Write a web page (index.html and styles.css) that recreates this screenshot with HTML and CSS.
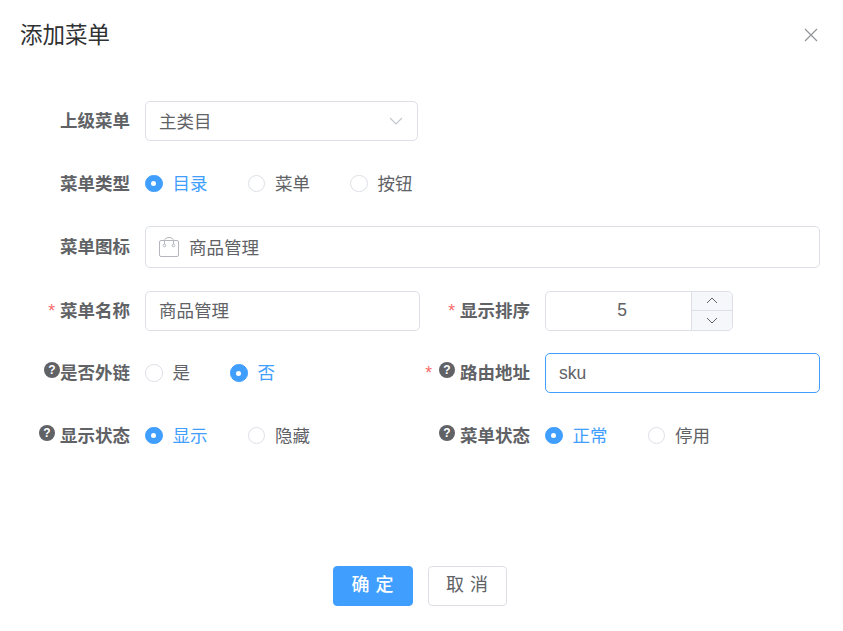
FILE: index.html
```html
<!DOCTYPE html>
<html lang="zh-CN">
<head>
<meta charset="utf-8">
<title>添加菜单</title>
<link rel="stylesheet" href="styles.css">
</head>
<body>
<div class="dialog">
  <header class="head">
    <span class="title">添加菜单</span>
    <svg class="close" width="14" height="14" viewBox="0 0 14 14"><path d="M1 1L13 13M13 1L1 13" stroke="#909399" stroke-width="1.2" fill="none"/></svg>
  </header>
  <form class="form">
    <div class="row">
      <div class="field">
        <label class="label">上级菜单</label>
        <div class="box select cjk"><span>主类目</span>
          <svg width="14" height="8" viewBox="0 0 14 8"><path d="M1 1L7 7L13 1" stroke="#c0c4cc" stroke-width="1.1" fill="none"/></svg>
        </div>
      </div>
    </div>
    <div class="row">
      <div class="field">
        <label class="label">菜单类型</label>
        <div class="radios">
          <span class="radio on"><i class="dot"></i>目录</span>
          <span class="radio"><i class="dot"></i>菜单</span>
          <span class="radio"><i class="dot"></i>按钮</span>
        </div>
      </div>
    </div>
    <div class="row">
      <div class="field grow">
        <label class="label">菜单图标</label>
        <div class="box icon-box cjk">
          <svg width="20" height="20" viewBox="0 0 20 20" fill="none" stroke="#b4b7bd" stroke-width="1"><rect x="0.5" y="3.5" width="19" height="16" rx="1.5"/><path d="M5.5 7V4a4.5 3.5 0 0 1 9 0V7"/><circle cx="5.5" cy="8.5" r="1.3"/><circle cx="14.5" cy="8.5" r="1.3"/></svg>
          <span>商品管理</span>
        </div>
      </div>
    </div>
    <div class="row">
      <div class="field half">
        <label class="label"><em class="req">*</em>菜单名称</label>
        <div class="box name cjk">商品管理</div>
      </div>
      <div class="field">
        <label class="label"><em class="req">*</em>显示排序</label>
        <div class="box number">
          <span class="num">5</span>
          <div class="steps">
            <span class="step"><svg width="12" height="7" viewBox="0 0 12 7"><path d="M1 6L6 1L11 6" stroke="#606266" stroke-width="1" fill="none"/></svg></span>
            <span class="step"><svg width="12" height="7" viewBox="0 0 12 7"><path d="M1 1L6 6L11 1" stroke="#606266" stroke-width="1" fill="none"/></svg></span>
          </div>
        </div>
      </div>
    </div>
    <div class="row">
      <div class="field half">
        <label class="label"><i class="help tight">?</i>是否外链</label>
        <div class="radios">
          <span class="radio short"><i class="dot"></i>是</span>
          <span class="radio on"><i class="dot"></i>否</span>
        </div>
      </div>
      <div class="field grow">
        <label class="label"><em class="req wide">*</em><i class="help">?</i>路由地址</label>
        <div class="box focus">sku</div>
      </div>
    </div>
    <div class="row">
      <div class="field half">
        <label class="label"><i class="help">?</i>显示状态</label>
        <div class="radios">
          <span class="radio on"><i class="dot"></i>显示</span>
          <span class="radio"><i class="dot"></i>隐藏</span>
        </div>
      </div>
      <div class="field">
        <label class="label"><i class="help">?</i>菜单状态</label>
        <div class="radios">
          <span class="radio on"><i class="dot"></i>正常</span>
          <span class="radio"><i class="dot"></i>停用</span>
        </div>
      </div>
    </div>
  </form>
  <footer class="foot">
    <button type="button" class="btn primary">确 定</button>
    <button type="button" class="btn">取 消</button>
  </footer>
</div>
</body>
</html>
```
FILE: styles.css
```css
* { box-sizing: border-box; }
html, body { margin: 0; background: #fff; }
body {
  font-family: "Liberation Sans", "Noto Sans CJK SC", sans-serif;
  font-size: 17.5px;
  color: #606266;
}
.dialog { width: 843px; height: 631px; padding: 0 23px 0 0; display: flex; flex-direction: column; }
.head { display: flex; justify-content: space-between; align-items: center; height: 70px; padding: 0 2px 0 20px; }
.title { font-size: 22.5px; color: #303133; line-height: 30px; margin-top: 2px; }
.form { margin-top: 31px; display: flex; flex-direction: column; gap: 22.5px; }
.row { display: flex; }
.field { display: flex; align-items: center; height: 40px; }
.field.half { width: 420px; }
.field.grow { flex: 1; }
.row:nth-child(3) .field { height: 42px; }
.label {
  width: 130px; margin-right: 15px; flex: none;
  display: flex; justify-content: flex-end; align-items: center;
  font-weight: 700; color: #606266; line-height: 40px; white-space: nowrap;
}
.half + .field .label { width: 110px; }
.req { font-style: normal; font-weight: 400; color: #f56c6c; margin-right: 5px; }
.req.wide { margin-right: 7px; }
.help {
  width: 16px; height: 16px; border-radius: 50%; background: #606266; color: #fff;
  font: 700 12px/16px "Liberation Sans", sans-serif; text-align: center;
  margin-right: 5px; margin-bottom: 6px;
}
.help.tight { margin-right: 0; }
.box {
  border: 1px solid #dcdfe6; border-radius: 5px; height: 40px; padding: 0 13px;
  display: flex; align-items: center; background: #fff; flex: 1;
}
.box.cjk { padding-bottom: 2px; }
.box.cjk svg { margin-top: 2px; }
.select { flex: none; width: 273px; justify-content: space-between; padding-right: 14px; }
.icon-box { height: 42px; gap: 10px; }
.name { flex: none; width: 275px; }
.focus { border-color: #409eff; }
.number { flex: none; width: 188px; padding: 0; position: relative; overflow: hidden; }
.num { width: 152px; text-align: center; }
.steps { position: absolute; top: 0; bottom: 0; right: 0; width: 41px; display: flex; flex-direction: column; background: #f5f7fa; border-left: 1px solid #dcdfe6; }
.step { flex: 1; display: flex; align-items: center; justify-content: center; }
.step + .step { border-top: 1px solid #dcdfe6; }
.radios { display: flex; align-items: center; }
.radio { display: inline-flex; align-items: center; color: #606266; width: 102.5px; padding-bottom: 3px; }
.radio.short { width: 85px; }
.radio.on { color: #409eff; }
.dot {
  width: 17.5px; height: 17.5px; border-radius: 50%; border: 1px solid #dcdfe6; background: #fff;
  margin-right: 10px; margin-top: 3px; flex: none; display: flex; align-items: center; justify-content: center;
}
.radio.on .dot { background: #409eff; border-color: #409eff; }
.radio.on .dot::after { content: ""; width: 5px; height: 5px; border-radius: 50%; background: #fff; }
.foot { margin-top: auto; margin-bottom: 25px; display: flex; justify-content: center; gap: 15px; padding-left: 19px; }
.btn {
  height: 40px; width: 79px; border: 1px solid #dcdfe6; border-radius: 4px; background: #fff; color: #606266;
  font: 400 18px "Liberation Sans", "Noto Sans CJK SC", sans-serif; padding: 0 0 6px; word-spacing: 1px;
}
.btn.primary { width: 80px; background: #409eff; border-color: #409eff; color: #fff; font-weight: 500; }
```
